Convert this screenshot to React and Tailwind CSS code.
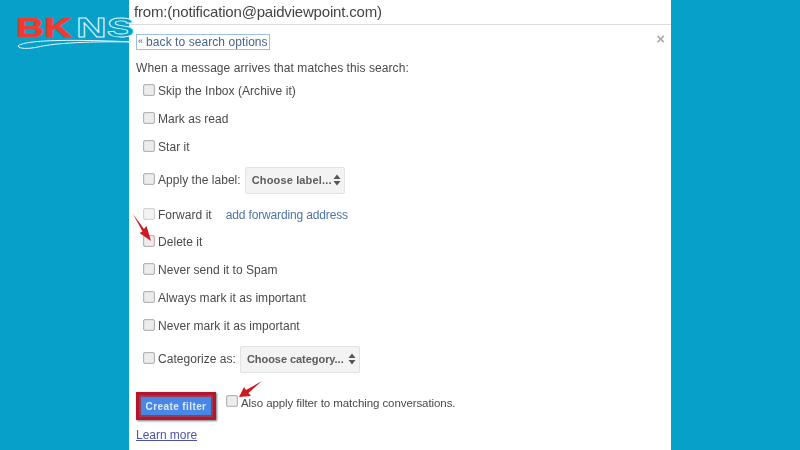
const font = { fontFamily: '"Liberation Sans", Arial, sans-serif' };

function Box({ className = "" }) {
  return <span className={`block w-[12px] h-[12px] shrink-0 rounded-[2px] border border-[#b5b5b5] bg-[#ececec] shadow-[inset_0_0_1px_#999] ${className}`} />;
}

function Row({ h, label, children, dim, textClass = "" }) {
  return (
    <div className={`flex items-center pl-[14px] ${h}`}>
      <Box className={dim ? "opacity-60 -mt-[3px]" : "-mt-[3px]"} />
      <span className={`ml-[3px] text-[12px] tracking-[0.04px] text-[#4a4a4a] ${textClass}`}>{label}</span>
      {children}
    </div>
  );
}

function Chooser({ text, w, ml, track }) {
  return (
    <div className={`flex items-center justify-between h-[27px] rounded-[2px] border border-[#e3e3e3] bg-[#f3f3f3] pl-[6px] pr-[3px] ${w} ${ml}`}>
      <span className={`whitespace-nowrap text-[11px] font-bold text-[#5c5c5c] ${track}`}>{text}</span>
      <svg className="shrink-0" width="8" height="12" viewBox="0 0 8 12"><path d="M4 0.5 7.5 5H.5zM4 11.5.5 7h7z" fill="#555" /></svg>
    </div>
  );
}

export default function App() {
  return (
    <div className="relative w-[800px] h-[450px] overflow-hidden bg-[#06a0c8] flex justify-center" style={font}>
      <div className="w-[542px] h-[450px] bg-white blur-[0.35px] flex flex-col">
        <div className="h-[25px] border-b border-[#dcdcdc] pl-[5px] flex items-center shrink-0">
          <span className="text-[15px] text-[#444] tracking-[-0.18px]">from:(notification@paidviewpoint.com)</span>
        </div>
        <div className="relative h-[34px] shrink-0 flex items-center pl-[7px]">
          <span className="flex items-center h-[16px] pl-[1px] pr-[1px] border border-[#9dbfe6] text-[12px] tracking-[0.07px] text-[#46648f] mt-[-1px]">
            <span className="text-[9px] mr-[3px]">«</span>back to search options
          </span>
          <span className="absolute right-[6px] top-[6px] text-[#ababab] text-[15px] font-bold leading-none">×</span>
        </div>
        <div className="h-[18px] shrink-0 pl-[7px] flex items-center text-[12px] tracking-[0.07px] text-[#4a4a4a]">When a message arrives that matches this search:</div>
        <Row h="h-[28px] shrink-0" label="Skip the Inbox (Archive it)" />
        <Row h="h-[28px] shrink-0" label="Mark as read" />
        <Row h="h-[28px] shrink-0" label="Star it" />
        <Row h="h-[38px] shrink-0" label="Apply the label:">
          <Chooser text="Choose label..." w="w-[100px]" ml="ml-[4px]" track="tracking-[0.15px]" />
        </Row>
        <Row h="h-[32px] shrink-0" label="Forward it" dim>
          <span className="ml-[14px] text-[12px] tracking-[-0.15px] text-[#4f73a5]">add forwarding address</span>
        </Row>
        <Row h="h-[25px] pb-[3px] shrink-0" label="Delete it" />
        <Row h="h-[28px] shrink-0" label="Never send it to Spam" />
        <Row h="h-[28px] shrink-0" label="Always mark it as important" />
        <Row h="h-[28px] shrink-0" label="Never mark it as important" />
        <Row h="h-[38px] shrink-0" label="Categorize as:">
          <Chooser text="Choose category..." w="w-[120px]" ml="ml-[4px]" track="tracking-[-0.05px]" />
        </Row>
        <div className="h-[14px] shrink-0" />
        <div className="flex items-center pl-[7px] h-[28px] shrink-0">
          <div className="w-[80px] h-[28px] border-[3px] border-[#b3172d] bg-[#9c3a52] p-[2px] shadow-[1px_1px_2px_#777]">
            <div className="h-full bg-[#4787e6] flex items-center justify-center text-[10px] font-bold tracking-[0.4px] text-[#dbe9fb] whitespace-nowrap">Create filter</div>
          </div>
          <Box className="ml-[10px] -mt-[10px]" />
          <span className="ml-[3px] text-[11.5px] tracking-[-0.08px] text-[#4a4a4a] -mt-[5px]">Also apply filter to matching conversations.</span>
        </div>
        <div className="pl-[7px] mt-[6px] text-[12px] tracking-[-0.03px] text-[#4d54a8] underline">Learn more</div>
      </div>

      <svg className="absolute left-[10px] top-[10px]" width="135" height="44" viewBox="0 0 135 44">
        <text x="6" y="27" textLength="56" lengthAdjust="spacingAndGlyphs" fontFamily="Liberation Sans" fontWeight="700" fontSize="27" fill="#ee3b2d" stroke="#ee3b2d" strokeWidth="0.6">BK</text>
        <text x="66" y="27" textLength="59" lengthAdjust="spacingAndGlyphs" fontFamily="Liberation Sans" fontWeight="700" fontSize="27" fill="#06a0c8" stroke="#dff4fb" strokeWidth="0.8">NS</text>
        <path d="M8 36C14 30 60 29 124 32 70 31 40 34 28 37 18 39 9 39 8 36Z" fill="none" stroke="#e8f7fc" strokeWidth="1" />
      </svg>

      <svg className="absolute left-0 top-0 pointer-events-none" width="800" height="450" viewBox="0 0 800 450">
        <path d="M133 214 144 229 146.5 226 151 241 139.5 233 142.5 231.5 133 214Z" fill="#cc1a22" />
        <path d="M262 381 246 390 244 387 239 397 251 396 248.5 393Z" fill="#cc1a22" />
      </svg>
    </div>
  );
}
